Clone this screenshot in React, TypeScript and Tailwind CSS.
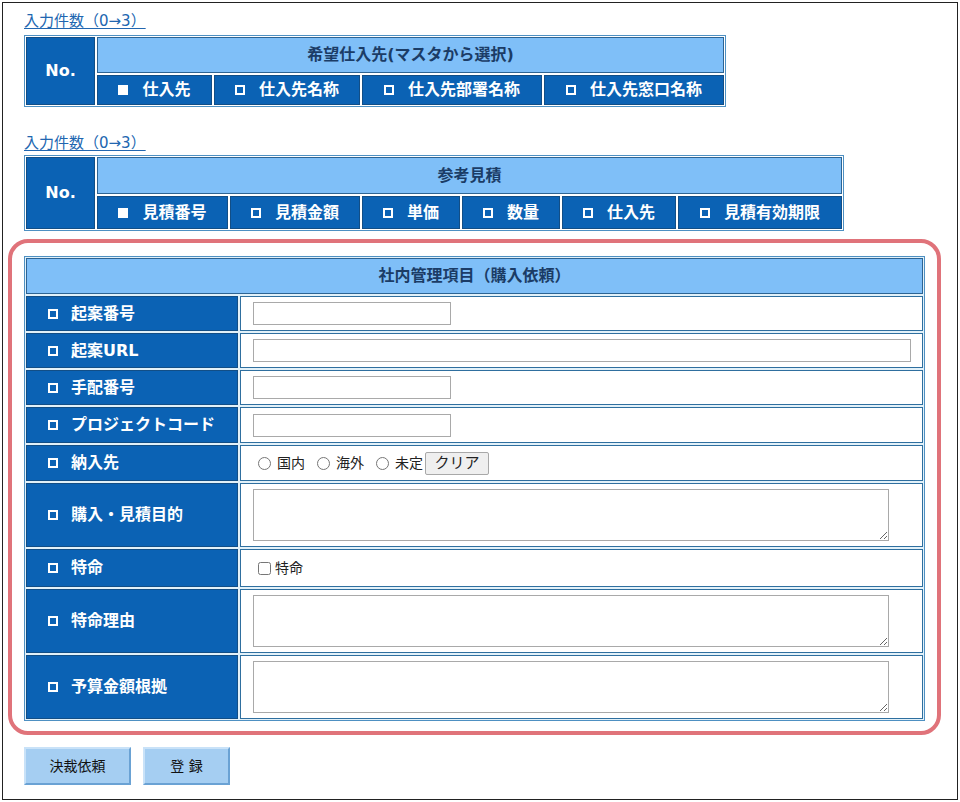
import React from 'react';

const FONT = "font-['DejaVu_Sans','Noto_Sans_CJK_JP',sans-serif]";

function Sq({ filled }: { filled?: boolean }) {
    return <span className={filled ? 'inline-block w-[10px] h-[10px] bg-white' : 'inline-block w-[10px] h-[10px] border-2 border-white'} />;
}

function SubHead({ label, filled }: { label: string; filled?: boolean }) {
    return (
        <div className="flex items-center justify-center gap-[14px] bg-[#0b62b4] border border-[#124e86] text-white font-bold text-[16px]">
            <Sq filled={filled} />
            <span>{label}</span>
        </div>
    );
}

function CountLink() {
    return <a href="#" className="block ml-[16px] w-fit text-[15px] leading-[20px] text-[#2166b0] underline underline-offset-2">入力件数（0→3）</a>;
}

function Label({ text }: { text: string }) {
    return (
        <div className="flex items-center gap-[13px] pl-[21px] bg-[#0b62b4] border border-[#124e86] text-white font-bold text-[16px]">
            <Sq />
            <span>{text}</span>
        </div>
    );
}

function Value({ children }: { children?: React.ReactNode }) {
    return <div className="flex items-center pl-[12px] bg-white border border-[#2f6f9f] text-[14px] text-[#222]">{children}</div>;
}

const inputCls = 'h-[23px] border border-[#a9a9a9] bg-white px-1 text-[14px]';
const areaCls = 'w-[636px] h-[52px] border border-[#a9a9a9] bg-white block';

export default function App() {
    const suppliers = [
        { label: '仕入先', filled: true },
        { label: '仕入先名称' },
        { label: '仕入先部署名称' },
        { label: '仕入先窓口名称' },
    ];
    const quotes = [
        { label: '見積番号', filled: true },
        { label: '見積金額' },
        { label: '単価' },
        { label: '数量' },
        { label: '仕入先' },
        { label: '見積有効期限' },
    ];

    return (
        <div className={`${FONT} m-[2px] w-[956px] h-[798px] border border-[#222] bg-white pt-[8px] pl-[5px]`}>
            <CountLink />
            <div className="ml-[16px] mt-[4px] w-[702px] grid grid-cols-[69px_115px_146px_180px_180px] grid-rows-[36px_30px] gap-[2px] p-[1px] border border-[#4e90c2] bg-white">
                <div className="row-span-2 flex items-center justify-center bg-[#0b62b4] border border-[#124e86] text-white font-bold text-[16px]">No.</div>
                <div className="col-span-4 flex items-center justify-center bg-[#7fbff8] border border-[#2d6494] text-[#1b3c66] font-bold text-[16px]">希望仕入先(マスタから選択)</div>
                {suppliers.map((s) => (
                    <SubHead key={s.label} label={s.label} filled={s.filled} />
                ))}
            </div>

            <div className="mt-[26px]">
                <CountLink />
            </div>
            <div className="ml-[16px] mt-[2px] w-[820px] grid grid-cols-[69px_131px_130px_98px_98px_114px_164px] grid-rows-[37px_33px] gap-[2px] p-[1px] border border-[#4e90c2] bg-white">
                <div className="row-span-2 flex items-center justify-center bg-[#0b62b4] border border-[#124e86] text-white font-bold text-[16px]">No.</div>
                <div className="col-span-6 flex items-center justify-center bg-[#7fbff8] border border-[#2d6494] text-[#1b3c66] font-bold text-[16px]">参考見積</div>
                {quotes.map((q) => (
                    <SubHead key={q.label} label={q.label} filled={q.filled} />
                ))}
            </div>

            <div className="mt-[8px] w-[933px] border-4 border-[#e0737a] rounded-[20px] pt-[13px] pb-[10px] px-[12px]">
                <div className="w-[901px] grid grid-cols-[212px_683px] grid-rows-[36px_35px_35px_35px_36px_36px_64px_38px_64px_64px] gap-[2px] p-[1px] border border-[#4e90c2] bg-[#e2f1f9]">
                    <div className="col-span-2 flex items-center justify-center bg-[#7fbff8] border border-[#2d6494] text-[#1b3c66] font-bold text-[16px]">社内管理項目（購入依頼）</div>

                    <Label text="起案番号" />
                    <Value><input className={`${inputCls} w-[198px]`} /></Value>

                    <Label text="起案URL" />
                    <Value><input className={`${inputCls} w-[658px]`} /></Value>

                    <Label text="手配番号" />
                    <Value><input className={`${inputCls} w-[198px]`} /></Value>

                    <Label text="プロジェクトコード" />
                    <Value><input className={`${inputCls} w-[198px]`} /></Value>

                    <Label text="納入先" />
                    <Value>
                        <label className="flex items-center">
                            <input type="radio" name="dest" className="m-0 ml-[5px] w-[13px] h-[13px]" />
                            <span className="ml-[6px]">国内</span>
                        </label>
                        <label className="flex items-center">
                            <input type="radio" name="dest" className="m-0 ml-[12px] w-[13px] h-[13px]" />
                            <span className="ml-[6px]">海外</span>
                        </label>
                        <label className="flex items-center">
                            <input type="radio" name="dest" className="m-0 ml-[12px] w-[13px] h-[13px]" />
                            <span className="ml-[6px]">未定</span>
                        </label>
                        <button className="ml-[2px] w-[64px] h-[23px] bg-[#efefef] border border-[#a8a8a8] rounded-[2px] text-[15px] text-[#222] leading-none">クリア</button>
                    </Value>

                    <Label text="購入・見積目的" />
                    <Value><textarea className={areaCls} /></Value>

                    <Label text="特命" />
                    <Value>
                        <label className="flex items-center">
                            <input type="checkbox" className="m-0 ml-[5px] w-[13px] h-[13px]" />
                            <span className="ml-[4px]">特命</span>
                        </label>
                    </Value>

                    <Label text="特命理由" />
                    <Value><textarea className={areaCls} /></Value>

                    <Label text="予算金額根拠" />
                    <Value><textarea className={areaCls} /></Value>
                </div>
            </div>

            <div className="mt-[12px] ml-[16px] flex gap-[12px]">
                <button className="w-[107px] h-[38px] bg-[#a5cef2] border-2 border-t-[#c9e2f8] border-l-[#c9e2f8] border-r-[#6aa2d4] border-b-[#6aa2d4] text-[14px] text-[#111]">決裁依頼</button>
                <button className="w-[87px] h-[38px] bg-[#a5cef2] border-2 border-t-[#c9e2f8] border-l-[#c9e2f8] border-r-[#6aa2d4] border-b-[#6aa2d4] text-[14px] text-[#111]">登 録</button>
            </div>
        </div>
    );
}
